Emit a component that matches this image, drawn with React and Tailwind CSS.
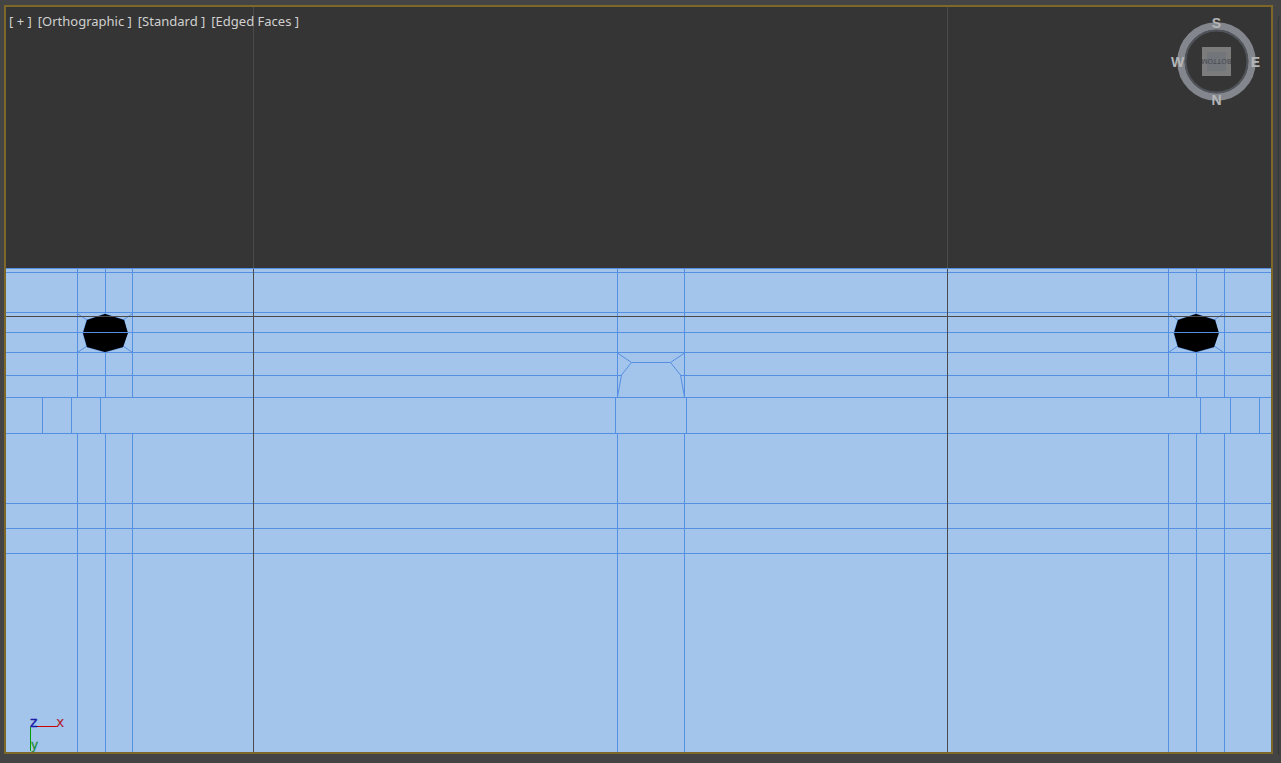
const EDGE = "#558fe2";

const fullRows = [268, 272, 312, 332, 352, 397, 433, 503, 528, 553];
const outerColumns = [77, 105, 132, 1168, 1196, 1224];
const slotColumns = [42, 71, 100, 615, 686, 1200, 1230, 1259];

function Hole({ x }) {
  return (
    <g transform={`translate(${x} 333)`}>
      <path d="M-27-19L-18-13M27-19L18-13M-27 19L-18 13M27 19L18 13" stroke={EDGE} />
      <path d="M0-19L19-13L22 0L18 14L0 19L-18 14L-22 0L-18-13Z" fill="#000" stroke={EDGE} />
      <path d="M0-19L19-13L23 0L18 14L0 19L-18 14L-22 0L-18-13Z" fill="#000" />
    </g>
  );
}

function Scene() {
  return (
    <svg className="block h-full w-full" viewBox="6 7 1265 745" preserveAspectRatio="xMidYMid slice" role="img" aria-label="Wireframe model">
      <rect x="6" y="7" width="1265" height="745" fill="#353535" />
      <path d="M253.5 7V268M947.5 7V268" stroke="#4b4b4b" />
      <rect x="6" y="268" width="1265" height="484" fill="#a3c4eb" />
      <g fill="none" stroke={EDGE} strokeWidth="1">
        {outerColumns.map((x) => (
          <path key={x} d={`M${x + 0.5} 268V397M${x + 0.5} 433V752`} />
        ))}
        {[617, 684].map((x) => (
          <path key={x} d={`M${x + 0.5} 268V397M${x + 0.5} 433V752`} />
        ))}
        {slotColumns.map((x) => (
          <path key={x} d={`M${x + 0.5} 397V433`} />
        ))}
        <path d="M6 375.5H621.5M680.5 375.5H1271" />
        <path d="M617.5 353L631.5 362.5H670.5L684.5 353M631.5 362.5L621.5 375L617.5 397M670.5 362.5L680.5 375L684.5 397" />
      </g>
      <Hole x={105} />
      <Hole x={1196} />
      <g stroke={EDGE}>
        {fullRows.map((y) => (
          <path key={y} d={`M6 ${y + 0.5}H1271`} />
        ))}
      </g>
      <path d="M6 316.5H1271M253.5 269V752M947.5 269V752" stroke="#4b4b4b" />
    </svg>
  );
}

function ViewCube() {
  return (
    <svg className="block" width="92" height="92" viewBox="1170 15 92 92" role="img" aria-label="View cube" fontFamily="Liberation Sans, Arial, sans-serif">
      <circle cx="1216.5" cy="61.5" r="35.5" fill="none" stroke="#83868c" strokeWidth="7.5" />
      <circle cx="1216.5" cy="61.5" r="31" fill="none" stroke="#50545a" strokeWidth="2" />
      <rect x="1202" y="47" width="29" height="29" fill="#7c7c7c" />
      <rect x="1207" y="52" width="19" height="19" fill="#72757a" />
      <text x="1216.5" y="64" transform="rotate(180 1216.5 61.5)" fontSize="7" textAnchor="middle" fill="#41454d">BOTTOM</text>
      <g fontSize="14" fontWeight="700" textAnchor="middle" fill="#b5b6b8">
        <text x="1216.5" y="28">S</text>
        <text x="1216.5" y="105">N</text>
        <text x="1177.5" y="67">W</text>
        <text x="1255.5" y="67">E</text>
      </g>
    </svg>
  );
}

function AxisTripod() {
  return (
    <svg className="block" width="44" height="38" viewBox="24 714 44 38" role="img" aria-label="Axes" fill="none">
      <path d="M30.5 727V751" stroke="#00a000" />
      <path d="M31 726.5H57" stroke="#d00000" />
      <g fontFamily="DejaVu Sans, sans-serif">
        <text x="30" y="727" fontSize="14" fill="#1c1ca8" stroke="#1c1ca8" strokeWidth="0.4">z</text>
        <text x="56" y="727" fontSize="14" fill="#b02030">x</text>
        <text x="31" y="749" fontSize="12" fill="#208a38" stroke="#208a38" strokeWidth="0.3">y</text>
      </g>
    </svg>
  );
}

const menus = ["[ + ]", "[Orthographic ]", "[Standard ]", "[Edged Faces ]"];

export default function App() {
  return (
    <div className="flex h-screen w-full overflow-hidden bg-[#444444]">
      <main className="relative mt-[5px] mb-[9px] ml-1 min-w-0 flex-1 overflow-hidden border-2 border-[#7d6827]">
        <Scene />
        <nav className="absolute top-[5px] left-[3px] flex gap-1.5 font-['Noto_Sans',sans-serif] text-[13px] leading-[18px] text-[#d0d0d0]">
          {menus.map((label) => (
            <button key={label} type="button">{label}</button>
          ))}
        </nav>
        <div className="absolute top-2 right-[9px]"><ViewCube /></div>
        <div className="absolute bottom-0 left-[18px]"><AxisTripod /></div>
      </main>
      <aside className="flex w-2 shrink-0 justify-end pt-4">
        <div className="mb-2 w-[3px] rounded-l border-l border-[#353535]" />
      </aside>
    </div>
  );
}
